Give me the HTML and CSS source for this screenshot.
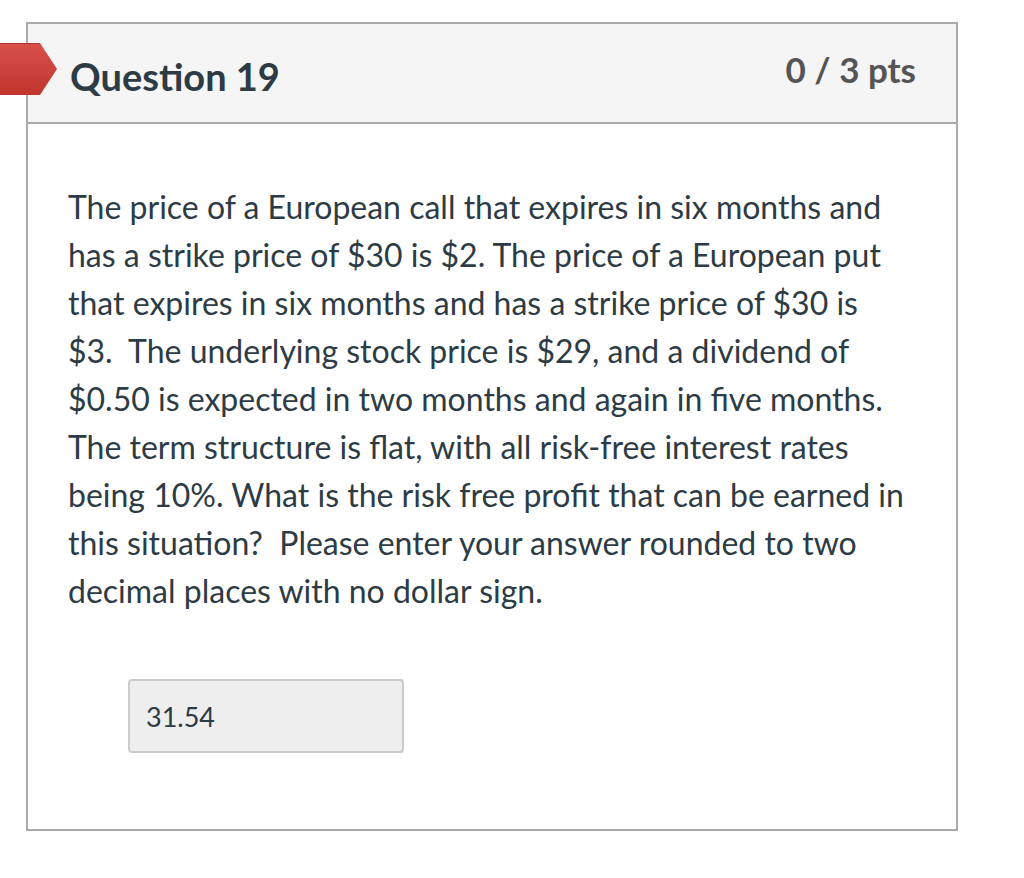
FILE: index.html
```html
<!DOCTYPE html>
<html>
<head>
<meta charset="utf-8">
<link rel="stylesheet" href="styles.css">
</head>
<body>
<div class="page">
  <div class="question">
    <div class="flag"></div>
    <div class="header">
      <h2 class="title">Question 19</h2>
      <div class="pts">0 / 3 pts</div>
    </div>
    <div class="content">
      <p class="text">The price of a European call that expires in six months and has a strike price of $30 is $2. The price of a European put that expires in six months and has a strike price of $30 is $3.&nbsp; The underlying stock price is $29, and a dividend of $0.50 is expected in two months and again in five months. The term structure is flat, with all risk-free interest rates being 10%. What is the risk free profit that can be earned in this situation?&nbsp; Please enter your answer rounded to two decimal places with no dollar sign.</p>
      <div class="answer"><div class="input">31.54</div></div>
    </div>
  </div>
</div>
</body>
</html>
```

FILE: styles.css
```css
html, body {
  margin: 0;
  padding: 0;
  background: #fff;
}
body {
  font-family: Lato, "Liberation Sans", sans-serif;
  color: #2d3b45;
}
.page {
  padding: 22px 0 0 26px;
}
.question {
  position: relative;
  width: 928px;
  border: 2px solid #aaaaaa;
}
.flag {
  position: absolute;
  left: -28px;
  top: 19px;
  width: 57px;
  height: 52px;
  background: linear-gradient(#d6514a, #c0352e);
  border-top: 1px solid #b8322c;
  box-sizing: border-box;
  clip-path: polygon(0 0, 40px 0, 57px 50%, 40px 100%, 0 100%);
}
.header {
  display: flex;
  justify-content: space-between;
  align-items: center;
  height: 98px;
  background: #f5f5f5;
  border-bottom: 2px solid #aaaaaa;
  padding: 0 40px 0 42px;
}
.title {
  margin: 0;
  font-size: 38px;
  font-weight: 700;
  color: #2d3b45;
  position: relative;
  top: 3px;
}
.pts {
  font-size: 35px;
  font-weight: 700;
  color: #555555;
  position: relative;
  top: -4px;
}
.content {
  padding: 59px 40px 76px 40px;
}
.text {
  margin: 0;
  font-size: 32px;
  line-height: 48px;
}
.answer {
  padding: 64px 0 0 60px;
}
.input {
  width: 276px;
  height: 74px;
  box-sizing: border-box;
  background: #eeeeee;
  border: 2px solid #cccccc;
  border-radius: 4px;
  padding: 0 16px;
  display: flex;
  align-items: center;
  font-size: 27px;
  color: #2d3b45;
}
```
